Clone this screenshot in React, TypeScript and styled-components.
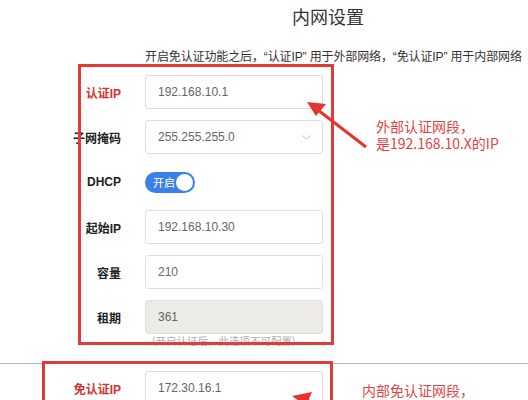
import React from "react";
import styled, { createGlobalStyle } from "styled-components";
import { ChevronDown } from "lucide-react";

const Global = createGlobalStyle`
  html, body { margin: 0; padding: 0; background: #fff; }
  body { font-family: "Liberation Sans", "Noto Sans CJK SC", sans-serif; color: #333; }
`;

const Page = styled.div`
  position: relative;
  width: 528px;
  height: 400px;
  overflow: hidden;
  background: #fff;
`;

const Title = styled.div`
  padding: 4px 0 0 292px;
  font-family: "Noto Sans CJK SC", sans-serif;
  font-size: 18px;
  line-height: 24px;
  color: #333;
`;

const Intro = styled.div`
  margin-top: 21px;
  padding-left: 145px;
  font-family: "Liberation Sans", "Noto Sans CJK SC", sans-serif;
  font-size: 12px;
  line-height: 16px;
  letter-spacing: -0.12px;
  color: #333;
  white-space: nowrap;
`;

const Form = styled.div<{ $top: number }>`
  margin-top: ${(p) => p.$top}px;
  display: grid;
  grid-template-columns: 121px 178px;
  grid-auto-rows: 34px;
  column-gap: 24px;
  row-gap: 11px;
`;

const Label = styled.div<{ $red?: boolean }>`
  align-self: center;
  justify-self: end;
  white-space: nowrap;
  font-family: "Liberation Sans", "Noto Sans CJK SC", sans-serif;
  font-weight: 700;
  font-size: 12px;
  color: ${(p) => (p.$red ? "#d8302c" : "#222")};
`;

const Field = styled.div<{ $disabled?: boolean }>`
  box-sizing: border-box;
  position: relative;
  display: flex;
  align-items: center;
  padding: 0 12px;
  border: 1px solid #dcdfe6;
  border-radius: 3px;
  background: ${(p) => (p.$disabled ? "#ecebe6" : "#fff")};
  font-size: 12px;
  color: #666;
`;

const Chevron = styled.span`
  margin-left: auto;
  margin-right: -4px;
  display: flex;
  color: #b8bcc4;
`;

const Toggle = styled.div`
  align-self: center;
  box-sizing: border-box;
  width: 50px;
  height: 21px;
  border-radius: 11px;
  background: #3d7fe8;
  display: flex;
  align-items: center;
  padding: 0 2px 0 8px;
  font-family: "Noto Sans CJK SC", sans-serif;
  font-size: 11px;
  color: #fff;
`;

const Knob = styled.span`
  margin-left: auto;
  width: 17px;
  height: 17px;
  border-radius: 50%;
  background: #fff;
`;

const Hint = styled.div`
  padding-left: 152px;
  font-family: "Noto Sans CJK SC", sans-serif;
  font-size: 10.5px;
  line-height: 14px;
  color: #b0b0b0;
  white-space: nowrap;
`;

const Divider = styled.div`
  margin-top: 15px;
  border-top: 1px solid #b4b4b4;
`;

const RedBox = styled.div<{ $l: number; $t: number; $w: number; $h: number }>`
  position: absolute;
  left: ${(p) => p.$l}px;
  top: ${(p) => p.$t}px;
  width: ${(p) => p.$w}px;
  height: ${(p) => p.$h}px;
  box-sizing: border-box;
  border: 3px solid #e33b38;
  pointer-events: none;
`;

const Note = styled.div<{ $l: number; $t: number }>`
  position: absolute;
  left: ${(p) => p.$l}px;
  top: ${(p) => p.$t}px;
  font-family: "Noto Sans CJK SC", sans-serif;
  font-size: 14px;
  line-height: 17px;
  color: #e5423f;
  white-space: nowrap;
`;

const Arrows = styled.svg`
  position: absolute;
  left: 0;
  top: 0;
  pointer-events: none;
`;

export default function App() {
  return (
    <Page>
      <Global />
      <Title>内网设置</Title>
      <Intro>开启免认证功能之后，“认证IP” 用于外部网络，“免认证IP” 用于内部网络</Intro>
      <Form $top={10}>
        <Label $red>认证IP</Label>
        <Field>192.168.10.1</Field>
        <Label>子网掩码</Label>
        <Field>
          255.255.255.0
          <Chevron>
            <ChevronDown size={15} strokeWidth={1.5} />
          </Chevron>
        </Field>
        <Label>DHCP</Label>
        <Toggle>
          开启
          <Knob />
        </Toggle>
        <Label>起始IP</Label>
        <Field>192.168.10.30</Field>
        <Label>容量</Label>
        <Field>210</Field>
        <Label>租期</Label>
        <Field $disabled>361</Field>
      </Form>
      <Hint>(开启认证后，此选项不可配置)</Hint>
      <Divider />
      <Form $top={7}>
        <Label $red>免认证IP</Label>
        <Field>172.30.16.1</Field>
      </Form>

      <RedBox $l={78} $t={64} $w={256} $h={281} />
      <RedBox $l={42} $t={361} $w={291} $h={60} />
      <Note $l={376} $t={118}>
        外部认证网段，
        <br />
        是192.168.10.X的IP
      </Note>
      <Note $l={362} $t={382}>内部免认证网段，</Note>
      <Arrows width="528" height="400" viewBox="0 0 528 400">
        <line x1="366" y1="147" x2="318" y2="110" stroke="#e5342f" strokeWidth="3" />
        <polygon points="307,102 326,104 316,116" fill="#e5342f" />
        <line x1="360" y1="420" x2="306" y2="400" stroke="#e5342f" strokeWidth="3" />
        <polygon points="292,396 312,392 306,406" fill="#e5342f" />
      </Arrows>
    </Page>
  );
}
